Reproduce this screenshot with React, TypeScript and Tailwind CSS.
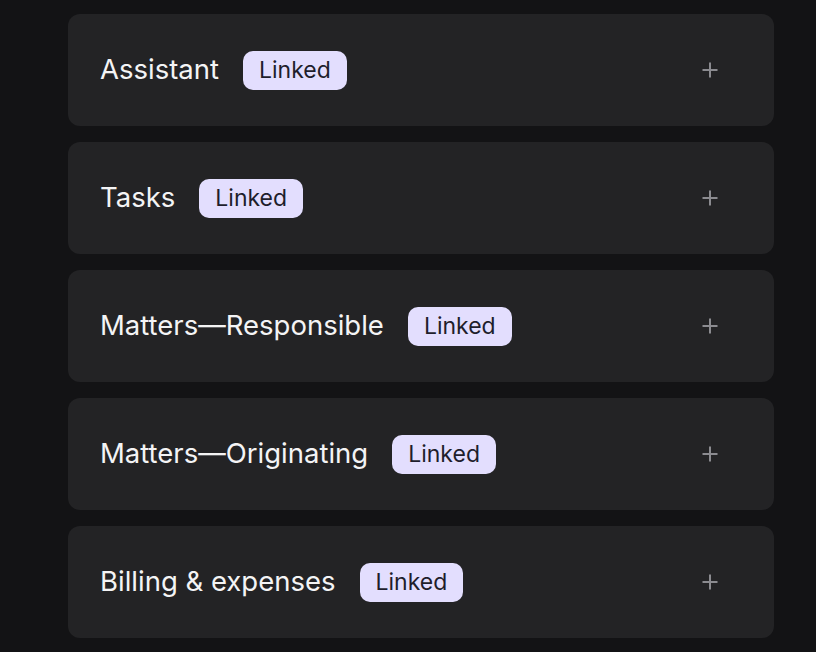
import React from "react";

const items = [
  "Assistant",
  "Tasks",
  "Matters\u2014Responsible",
  "Matters\u2014Originating",
  "Billing & expenses",
];

function Plus() {
  return (
    <svg width="18" height="18" viewBox="0 0 18 18" fill="none">
      <path d="M9 1.5v15M1.5 9h15" stroke="#8b8b90" strokeWidth="2" strokeLinecap="butt" />
    </svg>
  );
}

export default function App() {
  return (
    <div
      className="w-[816px] h-[652px] bg-[#131315] overflow-hidden pt-[14px] pl-[68px]"
      style={{ fontFamily: "Inter, 'Noto Sans', sans-serif" }}
    >
      <div className="w-[706px] flex flex-col gap-4">
        {items.map((t) => (
          <div
            key={t}
            className="h-[112px] rounded-xl bg-[#232325] flex items-center pl-[32px] pr-[55px]"
          >
            <span className="text-[27.5px] leading-none text-[#f4f4f5]">{t}</span>
            <span className="ml-6 rounded-[10px] bg-[#e3defe] text-[#1f1e2c] text-[23px] leading-[28px] px-4 py-[5.5px]">
              Linked
            </span>
            <div className="ml-auto flex items-center justify-center">
              <Plus />
            </div>
          </div>
        ))}
      </div>
    </div>
  );
}
